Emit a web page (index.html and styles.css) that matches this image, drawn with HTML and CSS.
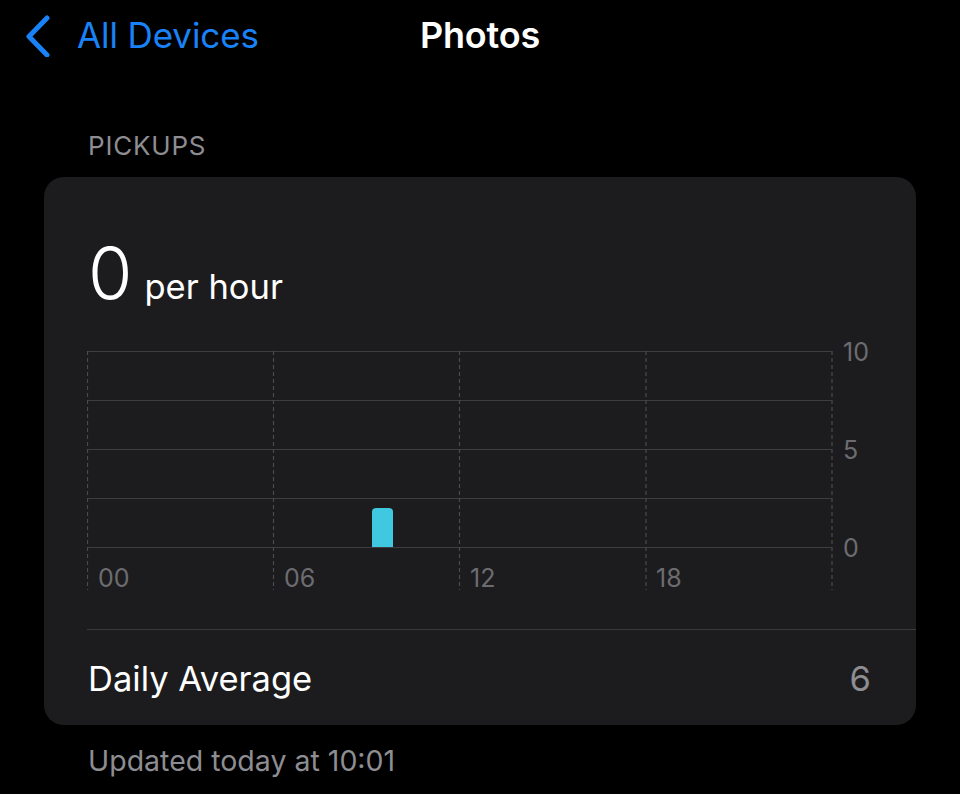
FILE: index.html
```html
<!DOCTYPE html>
<html>
<head>
<meta charset="utf-8">
<link rel="stylesheet" href="styles.css">
</head>
<body>
<header class="nav">
  <a class="back">
    <svg class="chev" width="30" height="44" viewBox="0 0 30 44"><path d="M23 5 L5 23.5 L23 42" fill="none" stroke="#1a82f7" stroke-width="5" stroke-linecap="round" stroke-linejoin="round"/></svg>
    <span class="back-label">All Devices</span>
  </a>
  <h1 class="title">Photos</h1>
</header>
<div class="section-label">PICKUPS</div>
<section class="card">
  <div class="stat"><span class="big">0</span><span class="unit">per hour</span></div>
  <svg class="chart" width="829" height="270" viewBox="0 0 829 270">
    <g stroke="#3d3d40" stroke-width="1.2">
      <line x1="0" y1="21.5" x2="745" y2="21.5"/>
      <line x1="0" y1="70.5" x2="745" y2="70.5"/>
      <line x1="0" y1="119.5" x2="745" y2="119.5"/>
      <line x1="0" y1="168.5" x2="745" y2="168.5"/>
      <line x1="0" y1="217.5" x2="745" y2="217.5"/>
    </g>
    <g stroke="#4a4a4d" stroke-width="1.2" stroke-dasharray="4 3">
      <line x1="0.5" y1="21" x2="0.5" y2="260"/>
      <line x1="186.5" y1="21" x2="186.5" y2="260"/>
      <line x1="372.5" y1="21" x2="372.5" y2="260"/>
      <line x1="559" y1="21" x2="559" y2="260"/>
      <line x1="745" y1="21" x2="745" y2="260"/>
    </g>
    <path d="M285 217 V182 Q285 178 289 178 H302 Q306 178 306 182 V217 Z" fill="#40c8e0"/>
    <g class="axis">
      <text x="756" y="31">10</text>
      <text x="756" y="129">5</text>
      <text x="756" y="227">0</text>
      <text x="11" y="257">00</text>
      <text x="197" y="257">06</text>
      <text x="383" y="257">12</text>
      <text x="569" y="257">18</text>
    </g>
  </svg>
  <div class="row">
    <span class="row-label">Daily Average</span>
    <span class="row-value">6</span>
  </div>
</section>
<div class="footer-note">Updated today at 10:01</div>
</body>
</html>
```
FILE: styles.css
```css
html, body {
  margin: 0;
  padding: 0;
  background: #000;
  font-family: Inter, "Noto Sans", "Liberation Sans", sans-serif;
  width: 960px;
  height: 794px;
  overflow: hidden;
}
.nav {
  position: relative;
  height: 74px;
  display: flex;
  align-items: center;
  justify-content: center;
}
.title {
  margin: 0 0 4px 0;
  color: #fff;
  font-size: 36px;
  font-weight: 600;
  letter-spacing: -0.2px;
  line-height: 44px;
}
.back {
  position: absolute;
  left: 24px;
  top: 10px;
  display: flex;
  align-items: center;
  height: 50px;
}
.chev {
  display: block;
}
.back-label {
  margin-left: 23px;
  color: #1a82f7;
  font-size: 35px;
  letter-spacing: -0.1px;
  line-height: 44px;
}
.section-label {
  margin: 55px 0 0 88px;
  height: 48px;
  color: #8d8d92;
  font-size: 26px;
  letter-spacing: 0.8px;
  line-height: 34px;
}
.card {
  margin: 0 44px;
  height: 548px;
  background: #1c1c1e;
  border-radius: 20px;
  padding-left: 43px;
  display: flex;
  flex-direction: column;
}
.stat {
  margin-top: 53px;
  margin-left: 1px;
  height: 100px;
  display: flex;
  align-items: baseline;
  color: #fff;
}
.big {
  font-size: 72px;
  font-weight: 300;
  line-height: 86px;
}
.unit {
  margin-left: 12px;
  font-size: 34.5px;
}
.chart {
  display: block;
}
.axis text {
  fill: #6c6c70;
  font-family: Inter, "Noto Sans", "Liberation Sans", sans-serif;
  font-size: 25px;
}
.row {
  margin-top: 29px;
  border-top: 1px solid #3a3a3c;
  height: 95px;
  display: flex;
  align-items: center;
  justify-content: space-between;
  padding-right: 45px;
  padding-top: 3px;
  box-sizing: border-box;
  font-size: 34.5px;
}
.row-label {
  color: #fff;
  margin-left: 1px;
}
.row-value {
  color: #8d8d92;
}
.footer-note {
  margin: 18px 0 0 88px;
  color: #8d8d92;
  font-size: 28.5px;
}
```
